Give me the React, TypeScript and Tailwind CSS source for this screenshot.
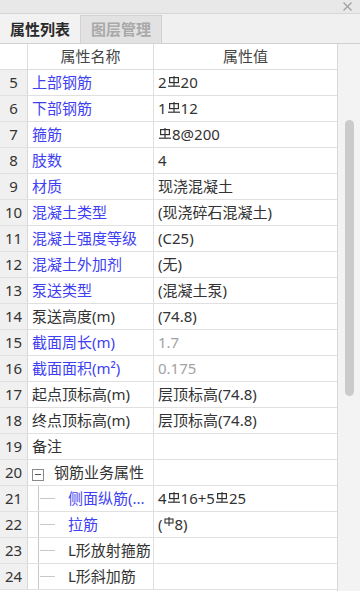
import React from "react";

const Hrb400 = () => (
  <svg width="12" height="11" viewBox="0 0 12 11" className="inline-block mx-[1px] -translate-y-[1px]" fill="none" stroke="currentColor" strokeWidth="1.2">
    <rect x="1.6" y="1.6" width="8.8" height="5" />
    <line x1="6" y1="0" x2="6" y2="10" />
    <line x1="0" y1="10.2" x2="12" y2="10.2" />
  </svg>
);

const Hpb300 = () => (
  <svg width="10" height="9" viewBox="0 0 10 9" className="inline-block mx-[1px] -translate-y-[3px]" fill="none" stroke="currentColor" strokeWidth="1.1">
    <rect x="1" y="2" width="8" height="4" />
    <line x1="5" y1="0" x2="5" y2="9" />
  </svg>
);

type Row = {
  n: number;
  name: string;
  blue?: boolean;
  value?: React.ReactNode;
  gray?: boolean;
  level?: 0 | 1 | 2;
};

const rows: Row[] = [
  { n: 5, name: "上部钢筋", blue: true, value: <>2<Hrb400 />20</> },
  { n: 6, name: "下部钢筋", blue: true, value: <>1<Hrb400 />12</> },
  { n: 7, name: "箍筋", blue: true, value: <><Hrb400 />8@200</> },
  { n: 8, name: "肢数", blue: true, value: "4" },
  { n: 9, name: "材质", blue: true, value: "现浇混凝土" },
  { n: 10, name: "混凝土类型", blue: true, value: "(现浇碎石混凝土)" },
  { n: 11, name: "混凝土强度等级", blue: true, value: "(C25)" },
  { n: 12, name: "混凝土外加剂", blue: true, value: "(无)" },
  { n: 13, name: "泵送类型", blue: true, value: "(混凝土泵)" },
  { n: 14, name: "泵送高度(m)", value: "(74.8)" },
  { n: 15, name: "截面周长(m)", blue: true, value: "1.7", gray: true },
  { n: 16, name: "截面面积(m²)", blue: true, value: "0.175", gray: true },
  { n: 17, name: "起点顶标高(m)", value: "层顶标高(74.8)" },
  { n: 18, name: "终点顶标高(m)", value: "层顶标高(74.8)" },
  { n: 19, name: "备注", value: "" },
  { n: 20, name: "钢筋业务属性", value: "", level: 1 },
  { n: 21, name: "侧面纵筋(...", blue: true, value: <>4<Hrb400 />16+5<Hrb400 />25</>, level: 2 },
  { n: 22, name: "拉筋", blue: true, value: <>(<Hpb300 />8)</>, level: 2 },
  { n: 23, name: "L形放射箍筋", value: "", level: 2 },
  { n: 24, name: "L形斜加筋", value: "", level: 2 },
];

export default function App() {
  return (
    <div
      className="w-[360px] h-[591px] overflow-hidden bg-[#f0f0f0] flex flex-col text-[#333]"
      style={{ fontFamily: '"Noto Sans", "Noto Sans CJK SC", sans-serif' }}
    >
      {/* title bar */}
      <div className="h-[14px] shrink-0 bg-[#e8e8e8] border-b border-[#d6d6d6] flex items-center justify-end pr-[8px]">
        <svg width="9" height="9" viewBox="0 0 9 9" stroke="#a0a0a0" strokeWidth="1.3">
          <line x1="0.5" y1="0.5" x2="8.5" y2="8.5" />
          <line x1="8.5" y1="0.5" x2="0.5" y2="8.5" />
        </svg>
      </div>
      {/* tabs */}
      <div className="h-[30px] shrink-0 flex items-end border-b border-[#d2d2d2] bg-[#f0f0f0]">
        <div className="w-[81px] h-[28px] flex items-center justify-center text-[15px] font-bold text-[#2a2a2a] bg-[#f2f2f2] border-r border-[#d2d2d2]">
          属性列表
        </div>
        <div className="w-[81px] h-[28px] flex items-center justify-center text-[15px] font-bold text-[#a9a9a9] bg-[#e2e2e2] border-r border-t border-[#d2d2d2]">
          图层管理
        </div>
      </div>
      {/* body */}
      <div className="flex-1 flex min-h-0">
        <div className="w-[337px] flex flex-col bg-white">
          <div className="h-[26px] shrink-0 flex border-b border-[#dedede] text-[15px] text-[#444]">
            <div className="w-[28px] border-r border-[#dedede] bg-white" />
            <div className="w-[126px] border-r border-[#dedede] flex items-center justify-center">属性名称</div>
            <div className="flex-1 flex items-center justify-center">属性值</div>
          </div>
          {rows.map((r) => (
            <div key={r.n} className="h-[26px] shrink-0 flex border-b border-[#e0e0e0] text-[15px]">
              <div className="w-[28px] shrink-0 bg-[#f0f0f0] border-r border-[#d8d8d8] flex items-center justify-center text-[#333]">
                {r.n}
              </div>
              <div className="w-[126px] shrink-0 border-r border-[#e0e0e0] flex items-center whitespace-nowrap overflow-hidden relative">
                {r.level === 1 && (
                  <>
                    <div className="ml-[4px] w-[12px] h-[12px] border border-[#8a8a8a] bg-white flex items-center justify-center mt-[4px]">
                      <div className="w-[6px] h-[1px] bg-[#555]" />
                    </div>
                    <span className="ml-[10px] text-[#333]">{r.name}</span>
                  </>
                )}
                {r.level === 2 && (
                  <>
                    <div className="absolute left-[10px] top-0 bottom-0 w-[1px] bg-[#c8c8c8]" />
                    <div className="ml-[12px] w-[15px] h-[1px] bg-[#c8c8c8]" />
                    <span className={`ml-[13px] ${r.blue ? "text-[#3f3ff2]" : "text-[#333]"}`}>{r.name}</span>
                  </>
                )}
                {!r.level && (
                  <span className={`pl-[4px] ${r.blue ? "text-[#3f3ff2]" : "text-[#333]"}`}>{r.name}</span>
                )}
              </div>
              <div className={`flex-1 flex items-center pl-[4px] whitespace-nowrap ${r.gray ? "text-[#a3a3a3]" : "text-[#333]"}`}>
                {r.value}
              </div>
            </div>
          ))}
        </div>
        <div className="flex-1 border-l border-[#d8d8d8] bg-[#f3f3f3] pt-[76px] flex justify-center">
          <div className="w-[9px] h-[276px] rounded-full bg-[#cbcbcb]" />
        </div>
      </div>
    </div>
  );
}
